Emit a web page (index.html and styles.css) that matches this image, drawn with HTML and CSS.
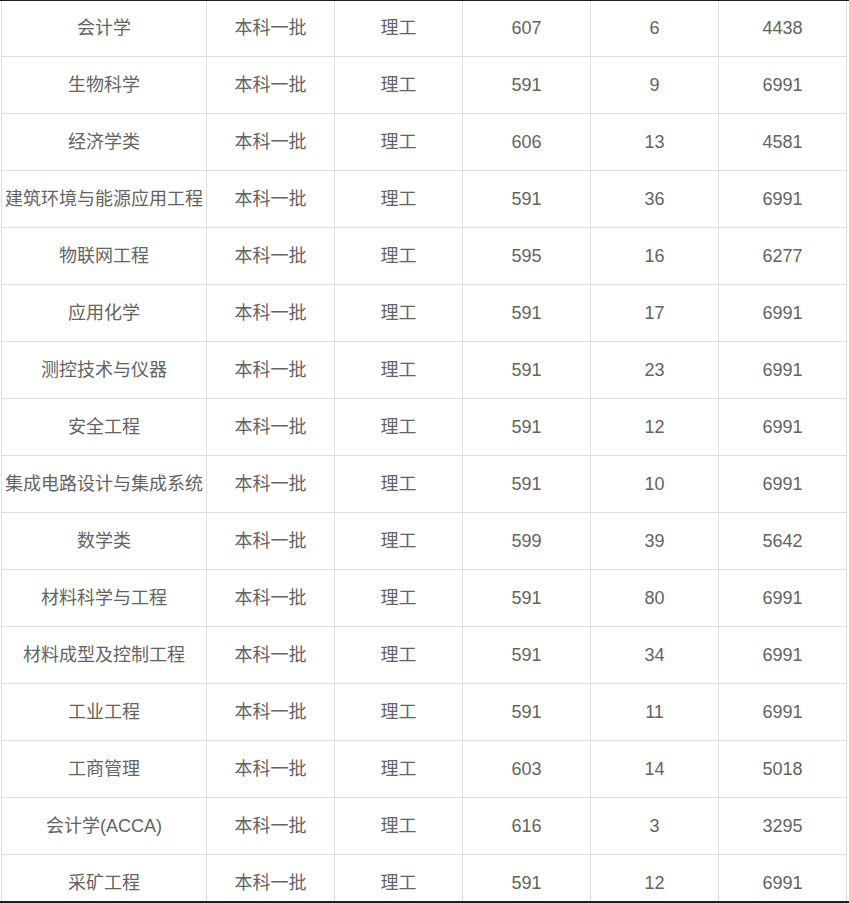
FILE: index.html
```html
<!DOCTYPE html>
<html lang="zh-CN">
<head>
<meta charset="utf-8">
<title>专业录取分数</title>
<link rel="stylesheet" href="styles.css">
</head>
<body>
<div class="frame">
<table class="scores">
<colgroup>
<col class="c-major"><col class="c-n"><col class="c-n"><col class="c-n"><col class="c-n"><col class="c-n">
</colgroup>
<tbody>
<tr><td>会计学</td><td>本科一批</td><td>理工</td><td>607</td><td>6</td><td>4438</td></tr>
<tr><td>生物科学</td><td>本科一批</td><td>理工</td><td>591</td><td>9</td><td>6991</td></tr>
<tr><td>经济学类</td><td>本科一批</td><td>理工</td><td>606</td><td>13</td><td>4581</td></tr>
<tr><td>建筑环境与能源应用工程</td><td>本科一批</td><td>理工</td><td>591</td><td>36</td><td>6991</td></tr>
<tr><td>物联网工程</td><td>本科一批</td><td>理工</td><td>595</td><td>16</td><td>6277</td></tr>
<tr><td>应用化学</td><td>本科一批</td><td>理工</td><td>591</td><td>17</td><td>6991</td></tr>
<tr><td>测控技术与仪器</td><td>本科一批</td><td>理工</td><td>591</td><td>23</td><td>6991</td></tr>
<tr><td>安全工程</td><td>本科一批</td><td>理工</td><td>591</td><td>12</td><td>6991</td></tr>
<tr><td>集成电路设计与集成系统</td><td>本科一批</td><td>理工</td><td>591</td><td>10</td><td>6991</td></tr>
<tr><td>数学类</td><td>本科一批</td><td>理工</td><td>599</td><td>39</td><td>5642</td></tr>
<tr><td>材料科学与工程</td><td>本科一批</td><td>理工</td><td>591</td><td>80</td><td>6991</td></tr>
<tr><td>材料成型及控制工程</td><td>本科一批</td><td>理工</td><td>591</td><td>34</td><td>6991</td></tr>
<tr><td>工业工程</td><td>本科一批</td><td>理工</td><td>591</td><td>11</td><td>6991</td></tr>
<tr><td>工商管理</td><td>本科一批</td><td>理工</td><td>603</td><td>14</td><td>5018</td></tr>
<tr><td>会计学(ACCA)</td><td>本科一批</td><td>理工</td><td>616</td><td>3</td><td>3295</td></tr>
<tr><td>采矿工程</td><td>本科一批</td><td>理工</td><td>591</td><td>12</td><td>6991</td></tr>
</tbody>
</table>
</div>
</body>
</html>
```
FILE: styles.css
```css
html, body {
  margin: 0;
  padding: 0;
  background: #fff;
}
.frame {
  box-sizing: border-box;
  height: 903px;
  overflow: hidden;
  border-top: 1px solid #1e1e1e;
  border-bottom: 2px solid #1e1e1e;
  padding-left: 1px;
}
.scores {
  margin-top: -2px;
  border-collapse: collapse;
  table-layout: fixed;
  width: 845px;
  font-family: Arial, "Liberation Sans", "Noto Sans CJK SC", sans-serif;
  font-size: 18px;
  color: #636363;
}
.c-major { width: 205px; }
.c-n { width: 128px; }
.scores td {
  border: 1px solid #dedede;
  height: 56px;
  padding: 0;
  text-align: center;
  vertical-align: middle;
  white-space: nowrap;
  line-height: 24px;
}
```
